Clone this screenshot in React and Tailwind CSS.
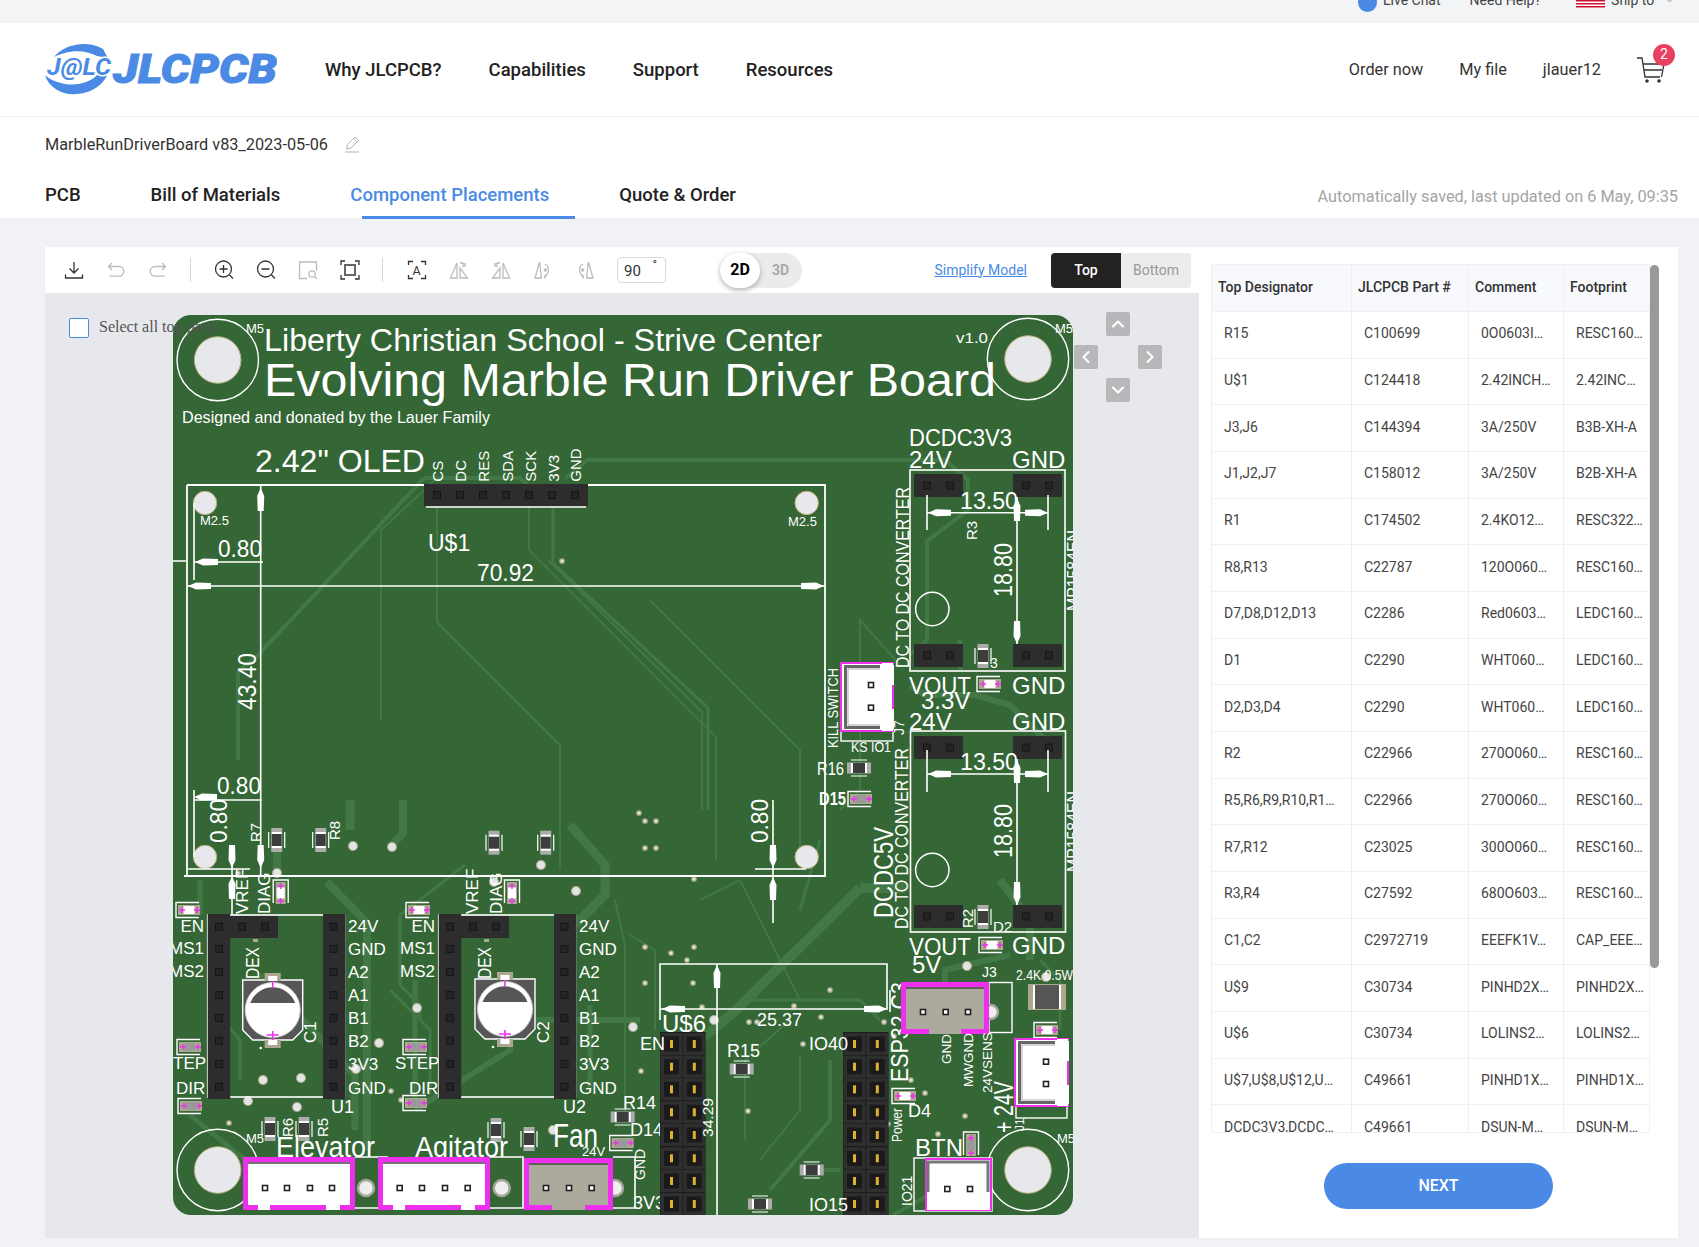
import React from "react";
import { ChevronUp, ChevronDown, ChevronLeft, ChevronRight } from "lucide-react";

const T = ({ x, y, s = 18, w, r, a, c = "#fff", fw, children }) => (
  <text
    {...(r ? { transform: `translate(${x} ${y}) rotate(-90)` } : { x, y })}
    fontSize={s}
    fill={c}
    fontWeight={fw}
    textAnchor={a}
    {...(w ? { textLength: w, lengthAdjust: "spacingAndGlyphs" } : {})}
  >
    {children}
  </text>
);
const Arw = ({ x, y, d = 0 }) => (
  <polygon transform={`translate(${x} ${y}) rotate(${d})`} points="0,0 8,-3.5 23,-3 23,3 8,3.5" fill="#fff" />
);
const L2 = ({ d, w = 1.6 }) => <path d={d} fill="none" stroke="#fff" strokeWidth={w} />;
const Res = ({ x, y, v }) => (
  <g transform={`translate(${x} ${y}) rotate(${v ? 90 : 0})`}>
    <rect x="-12" y="-5.5" width="24" height="11" fill="#acacac" />
    <rect x="-8" y="-5" width="16" height="10" fill="#fff" />
    <rect x="-6" y="-5" width="12" height="10" fill="#3d3d3d" />
    <path d="M-8 -8H8M-8 8H8" stroke="#fff" strokeWidth="1.2" />
  </g>
);
const Led = ({ x, y, v, g }) => (
  <g transform={`translate(${x} ${y}) rotate(${v ? 90 : 0})`}>
    <path d="M10 -7.5H-13V7.5H10" fill="none" stroke="#fff" strokeWidth="1.4" />
    <rect x="-11" y="-5" width="22" height="10" fill="#aba88f" />
    <rect x="-5.5" y="-4" width="11" height="8" fill={g ? "#9a9a9a" : "#fff"} />
    <path d="M-10 0H-4M-7 -3V3M5 0H11M8 -3V3" stroke="#ee30ee" strokeWidth="1.4" />
  </g>
);
const Via = ({ p, big }) => (
  <circle cx={p[0]} cy={p[1]} r={big ? 4.5 : 2.2} fill="#e3e4e4" stroke="#a9a98a" strokeWidth={big ? 1.2 : 1.3} />
);
const PinSq = ({ x, y }) => <rect x={x - 3.5} y={y - 3.5} width="7" height="7" fill="#242424" stroke="#161616" strokeWidth="1" />;
const Hdr2 = ({ x, y, h = 23 }) => (
  <g>
    <rect x={x} y={y} width="49" height={h} fill="#2d2d2d" />
    <PinSq x={x + 13} y={y + h / 2} />
    <PinSq x={x + 36} y={y + h / 2} />
  </g>
);
const Conn = ({ x, y, w, h, pins, tan, py }) => (
  <g>
    <rect x={x} y={y} width={w} height={h} fill="#ee30ee" />
    <rect x={x + 5} y={y + 5} width={w - 10} height={h - 10} fill={tan ? "#aca99d" : "#fff"} />
    <path d={`M${x + 5} ${y + 6}H${x + w - 5}`} stroke="#444" strokeWidth="1.5" />
    {!tan && <rect x={x + 15} y={y + h - 6} width="12" height="6" fill="#fff" />}
    {!tan && <rect x={x + w - 29} y={y + h - 6} width="14" height="6" fill="#fff" />}
    {tan && <rect x={x + 28} y={y + h - 5} width={w - 56} height="5" fill="#aca99d" />}
    {pins.map((p) => (
      <rect key={p} x={p - 2.5} y={py - 2.5} width="5" height="5" fill="#fff" stroke="#222" strokeWidth="1.6" />
    ))}
  </g>
);
const ConnV = ({ x, y, w, h, pins, px }) => (
  <g>
    <rect x={x} y={y} width={w} height={h} fill="#fff" stroke="#ee30ee" strokeWidth="2" />
    <path d={`M${x + w - 1} ${y + 12}V${y + h - 12}`} stroke="#fff" strokeWidth="4" />
    <path d={`M${x + w - 11} ${y + 2}H${x + w}M${x + w - 11} ${y + h - 2}H${x + w}M${x + w - 1} ${y + 2}V${y + h - 2}`} stroke="#fff" strokeWidth="4" />
    <path d={`M${x + w - 13} ${y + 3.5}H${x + 4.5}V${y + h - 3.5}H${x + w - 13}`} fill="none" stroke="#666" strokeWidth="3" />
    <path d={`M${x + w - 13} ${y + 6}H${x + 7}V${y + h - 6}H${x + w - 13}`} fill="none" stroke="#aaa" strokeWidth="1" />
    <path d={`M${x + w} ${y + 22}V${y + 46}`} stroke="#ee30ee" strokeWidth="2" />
    {pins.map((p) => (
      <rect key={p} x={px - 2.5} y={p - 2.5} width="5" height="5" fill="#fff" stroke="#222" strokeWidth="1.6" />
    ))}
  </g>
);
const Cap = ({ cx, cy }) => (
  <g>
    <path d={`M${cx - 30} ${cy - 30}H${cx + 30}V${cy + 20}L${cx + 20} ${cy + 30}H${cx - 20}L${cx - 30} ${cy + 20}Z`} fill="#565656" stroke="#fff" strokeWidth="1.4" />
    <rect x={cx - 8} y={cy - 37} width="16" height="8" fill="#aba88f" />
    <rect x={cx - 4.5} y={cy - 34} width="9" height="5" fill="#fff" />
    <rect x={cx - 8} y={cy + 30} width="16" height="8" fill="#aba88f" />
    <rect x={cx - 4.5} y={cy + 30} width="9" height="5" fill="#fff" />
    <circle cx={cx} cy={cy} r="27.5" fill="#fff" stroke="#cfcfcf" strokeWidth="1" />
    <path d={`M${cx - 22.5} ${cy - 7}A24 24 0 0 1 ${cx + 22.5} ${cy - 7}Z`} fill="#565656" />
    <path d={`M${cx} ${cy - 29}V${cy - 22}M${cx - 6} ${cy + 25}H${cx + 6}M${cx} ${cy + 21}V${cy + 30}`} stroke="#ee30ee" strokeWidth="1.6" />
    <circle cx={cx - 12} cy={cy + 38} r="1.3" fill="#fff" />
  </g>
);

const traces = [
  ["M424 478L258 655L238 672V760", 4],
  ["M424 478H520L535 492", 4],
  ["M587 460L566 478", 4],
  ["M587 460H945L968 480V510L927 541V640L910 655", 4],
  ["M381 720V530L437 478", 2],
  ["M437 505V622L560 745V870", 2],
  ["M529 505V550L716 737V860", 2],
  ["M553 505V563L708 708V810", 3],
  ["M548 560L702 712V810", 2],
  ["M650 600L800 750V860", 2],
  ["M860 888L733 1013L700 1040", 10],
  ["M860 888H905", 10],
  ["M327 882L367 923V1150", 8],
  ["M403 800V833L392 845", 8],
  ["M277 850V875", 8],
  ["M350 800V830", 9],
  ["M570 825L605 865V895L575 925", 9],
  ["M465 865L400 915V985L420 1005V1020", 3],
  ["M390 990L430 1030V1095", 3],
  ["M260 975L355 1075V1130", 7],
  ["M415 980V1100", 5],
  ["M415 1110L510 1050V1000", 6],
  ["M530 1020H640", 6],
  ["M590 1005V1090", 5],
  ["M615 900L625 945V1120", 2],
  ["M630 935L655 950V1030", 2],
  ["M740 1000H860L880 1020", 3],
  ["M790 1020L745 1060V1140", 2],
  ["M800 1055V1110L760 1160", 2],
  ["M810 1170H840", 4],
  ["M770 1190L830 1120V1060", 4],
  ["M893 1215L955 1180", 4],
  ["M1000 880L1030 920V960", 8],
  ["M965 1020L945 1000V970L1010 955", 6],
  ["M1040 960L1060 980V1030", 3],
  ["M910 685L925 695H975L1010 705L1060 755", 6],
  ["M960 640V670", 5],
  ["M900 665L860 620V720", 2],
  ["M860 730V790L840 810", 2],
  ["M820 840L800 910", 3],
  ["M700 900L740 880L800 1000", 2],
  ["M200 880V915", 5],
  ["M190 1115L245 1160", 5],
  ["M215 1010L240 1040V1080", 3],
];
const small = [
  [562,561],[639,813],[645,821],[645,848],[645,947],[645,983],[641,1071],[391,1091],[401,1100],[229,1123],[238,873],[656,821],[656,848],[694,879],[694,947],[671,953],[687,960],[693,983],[830,990],[794,1006],[702,1007],[821,1017],[749,1022],[757,1022],[884,1022],[803,1044],[894,1036],[911,1080],[925,1093],[965,1116],[938,1134],[748,1111],[888,1124],
];
const bigv = [
  [353,846],[392,847],[277,873],[541,865],[494,882],[576,891],[417,1008],[379,1043],[263,1080],[301,1078],[248,1101],[297,1107],[356,1069],[633,1027],[553,1130],[967,966],[1046,977],[714,1020],
];
const ly = [926.7, 949, 972, 995, 1018, 1040.7, 1064, 1086.7];
const ry = ["24V", "GND", "A2", "A1", "B1", "B2", "3V3", "GND"];
const lb = [932, 955, 978, 1001, 1024, 1047, 1070, 1094];

const Module = ({ dx }) => (
  <g>
    <rect x={207.7 + dx} y="915" width="137" height="182" fill="none" stroke="#fff" strokeWidth="1.6" />
    <rect x={207.7 + dx} y="914" width="22.5" height="185" fill="#2d2d2d" />
    <rect x={323 + dx} y="914" width="22.5" height="185" fill="#2d2d2d" />
    <rect x={230 + dx} y="916" width="48" height="22" fill="#2d2d2d" />
    {ly.map((y) => <PinSq key={y} x={219 + dx} y={y} />)}
    {ly.map((y) => <PinSq key={y} x={333.5 + dx} y={y} />)}
    <PinSq x={242 + dx} y="926.7" />
    <PinSq x={265 + dx} y="926.7" />
    {ry.map((t, i) => <T key={i} x={348 + dx} y={lb[i]} s={17}>{t}</T>)}
    {[["EN", 932], ["MS1", 954], ["MS2", 977]].map(([t, y]) => <T key={t} x={204 + dx} y={y} s={17} a="end">{t}</T>)}
  </g>
);
const HdrRow = ({ x }) => (
  <g>
    <rect x={x} y="1032" width="45.5" height="183" fill="#1c1c1c" />
    {[1044, 1066.7, 1089.3, 1112.3, 1135, 1158.3, 1181, 1204].map((y) => (
      <g key={y}>
        {[0, 22.8].map((o) => (
          <g key={o}>
            <rect x={x + o + 0.5} y={y - 11} width="22" height="22" fill="#2f2f2f" />
            <rect x={x + o + 4} y={y - 7.5} width="15" height="15" fill="#1a1a1a" />
            <rect x={x + o + 10} y={y - 4} width="3" height="8" fill="#e0b030" />
          </g>
        ))}
      </g>
    ))}
  </g>
);

function Board() {
  return (
    <svg viewBox="173 315 900 900" className="block w-[900px] h-[900px] font-['Liberation_Sans',sans-serif]">
      <defs>
        <clipPath id="bd"><rect x="173" y="315" width="900" height="900" rx="18" /></clipPath>
      </defs>
      <g clipPath="url(#bd)">
        <rect x="173" y="315" width="900" height="900" fill="#346636" />
        <g fill="none" stroke="#427845" strokeLinejoin="miter">
          {traces.map(([d, w], i) => <path key={i} d={d} strokeWidth={w} />)}
        </g>
        {small.map((p, i) => <Via key={i} p={p} />)}
        {bigv.map((p, i) => <Via key={i} p={p} big />)}

        {[[217.7, 360], [1028, 359], [217.7, 1170], [1028, 1170]].map(([x, y]) => (
          <g key={x + "" + y}>
            <circle cx={x} cy={y} r="23.3" fill="#e7e8ec" stroke="#b9b07a" strokeWidth="1" />
            <circle cx={x} cy={y} r="40.7" fill="none" stroke="#fff" strokeWidth="1.4" />
          </g>
        ))}
        <T x={246} y={333} s={13}>M5</T>
        <T x={1055} y={333} s={13}>M5</T>
        <T x={246} y={1143} s={13}>M5</T>
        <T x={1057} y={1143} s={13}>M5</T>
        <T x={956} y={343} s={15} w={32}>v1.0</T>

        <T x={264} y={351} s={31} w={558}>Liberty Christian School - Strive Center</T>
        <T x={264} y={396} s={46} w={732}>Evolving Marble Run Driver Board</T>
        <T x={182} y={423} s={17} w={308}>Designed and donated by the Lauer Family</T>
        <T x={255} y={472} s={31} w={170}>2.42" OLED</T>

        {[["CS", 442.7], ["DC", 466], ["RES", 489], ["SDA", 512.7], ["SCK", 535.7], ["3V3", 558.7], ["GND", 580.7]].map(([t, x]) => (
          <T key={t} x={x} y={481.7} s={15} r>{t}</T>
        ))}

        {/* OLED outline and dimensions */}
        <L2 d="M187 485H825V876H184" w={1.8} />
        <L2 d="M187 485V876" w={1.8} />
        <rect x="424" y="484" width="164" height="22" fill="#2d2d2d" />
        <L2 d="M426 507H586" w={1.5} />
        {[437, 460, 483, 506, 529, 552, 575].map((x) => <PinSq key={x} x={x} y={495} />)}
        {[[205, 503], [806.7, 503], [205, 857], [806.7, 857]].map(([x, y]) => (
          <circle key={x + "" + y} cx={x} cy={y} r="11.7" fill="#e7e8ec" stroke="#b9b07a" strokeWidth="1" />
        ))}
        <T x={200} y={525} s={13}>M2.5</T>
        <T x={788} y={526} s={13}>M2.5</T>
        <L2 d="M194 503V580M194 562H263M173 561H186" />
        <Arw x={195} y={562} />
        <T x={218} y={557} s={23} w={44}>0.80</T>
        <L2 d="M260.7 485V876" />
        <Arw x={260.7} y={488} d={90} />
        <L2 d="M187 586H825" />
        <Arw x={188} y={586} />
        <Arw x={824} y={586} d={180} />
        <T x={428} y={551} s={23}>U$1</T>
        <T x={477} y={581} s={23} w={57}>70.92</T>
        <T x={256} y={710} s={25} w={57} r>43.40</T>
        <T x={217} y={794} s={23} w={44}>0.80</T>
        <L2 d="M194 800H262M194 790V857M187 869H250" />
        <Arw x={194} y={797} />
        <T x={226.7} y={843} s={23} w={44} r>0.80</T>
        <L2 d="M232 845V915" />
        <Arw x={232} y={868} d={-90} />
        <Arw x={232} y={876} d={90} />
        <Arw x={260.7} y={868} d={-90} />
        <T x={768} y={843} s={23} w={44} r>0.80</T>
        <L2 d="M773 800V923M755 869H806" />
        <Arw x={773} y={868} d={-90} />
        <Arw x={773} y={877} d={90} />

        {/* DC-DC 3V3 */}
        <T x={909} y={446} s={24} w={103}>DCDC3V3</T>
        <T x={909} y={468} s={24}>24V</T>
        <T x={1012} y={468} s={24}>GND</T>
        <rect x="910" y="470" width="155" height="201" fill="none" stroke="#fff" strokeWidth="1.6" />
        <Hdr2 x={914} y={474} />
        <Hdr2 x={1013} y={474} />
        <Hdr2 x={914} y={644} />
        <Hdr2 x={1013} y={644} />
        <T x={960} y={509} s={24} w={58}>13.50</T>
        <L2 d="M927 495V530M1048 495V530M927 512.7H1048M1017 497V644" />
        <Arw x={928} y={512.7} />
        <Arw x={1048} y={512.7} d={180} />
        <Arw x={1017} y={498} d={90} />
        <Arw x={1017} y={644} d={-90} />
        <T x={1011.7} y={597} s={26} w={54} r>18.80</T>
        <T x={977} y={540} s={15} r>R3</T>
        <circle cx="932.3" cy="609" r="16.7" fill="none" stroke="#fff" strokeWidth="1.5" />
        <T x={908.7} y={668} s={18.5} w={181} r>DC TO DC CONVERTER</T>
        <T x={1079} y={611} s={16} w={81} r>MP1584EN</T>
        <Res x={983} y={656} v />
        <T x={990} y={668} s={14}>3</T>
        <T x={909} y={694} s={24} w={62}>VOUT</T>
        <T x={1012} y={694} s={24}>GND</T>
        <Led x={990} y={684} />
        <T x={921} y={709} s={24}>3.3V</T>

        {/* DC-DC 5V */}
        <T x={909} y={730} s={24}>24V</T>
        <T x={1012} y={730} s={24}>GND</T>
        <rect x="910.5" y="731" width="155" height="201" fill="none" stroke="#fff" strokeWidth="1.6" />
        <Hdr2 x={914} y={736} />
        <Hdr2 x={1013} y={736} />
        <Hdr2 x={914} y={905} />
        <Hdr2 x={1013} y={905} />
        <T x={960} y={770} s={24} w={58}>13.50</T>
        <L2 d="M927 750V792M1048 750V792M927 774H1048M1017 759V905" />
        <Arw x={928} y={774} />
        <Arw x={1048} y={774} d={180} />
        <Arw x={1017} y={760} d={90} />
        <Arw x={1017} y={905} d={-90} />
        <T x={1011.7} y={858} s={26} w={54} r>18.80</T>
        <circle cx="932.3" cy="870" r="16.7" fill="none" stroke="#fff" strokeWidth="1.5" />
        <T x={908} y={929} s={18.5} w={181} r>DC TO DC CONVERTER</T>
        <T x={1079} y={872} s={16} w={81} r>MP1584EN</T>
        <T x={893} y={918} s={27} w={91} r>DCDC5V</T>
        <T x={973} y={928} s={15} r>R2</T>
        <Res x={983} y={917} v />
        <T x={993} y={932} s={15}>D2</T>
        <T x={909} y={955} s={24} w={62}>VOUT</T>
        <T x={1012} y={954} s={24}>GND</T>
        <Led x={992} y={945} />
        <T x={912} y={973} s={24}>5V</T>

        {/* Kill switch */}
        <rect x="841" y="700" width="52" height="41" fill="none" stroke="#fff" strokeWidth="1.4" />
        <ConnV x={841} y={663} w={52} h={68} pins={[685, 707.7]} px={871} />
        <T x={838.3} y={748} s={14} w={80} r>KILL SWITCH</T>
        <T x={851} y={751.7} s={14} w={40}>KS IO1</T>
        <T x={904} y={735} s={14} r>J7</T>
        <T x={817} y={775} s={18} w={27}>R16</T>
        <Res x={859} y={768} />
        <T x={819} y={805} s={18} w={27} fw={700}>D15</T>
        <Led x={861} y={799} g />

        {/* Driver modules */}
        <Module dx={0} />
        <Module dx={231} />
        <T x={173} y={1069} s={17}>TEP</T>
        <T x={176} y={1094} s={17}>DIR</T>
        <T x={395} y={1069} s={17}>STEP</T>
        <T x={409} y={1094} s={17}>DIR</T>
        <T x={247.7} y={914} s={17} r>VREF</T>
        <T x={270} y={914} s={17} r>DIAG</T>
        <T x={478} y={914} s={17} r>VREF</T>
        <T x={502} y={914} s={17} r>DIAG</T>
        <T x={259} y={979} s={18} w={32} r>DEX</T>
        <T x={491} y={979} s={18} w={32} r>DEX</T>
        <Cap cx={272.7} cy={1010} />
        <Cap cx={505} cy={1009} />
        <T x={316} y={1043} s={17} r>C1</T>
        <T x={549} y={1043} s={17} r>C2</T>
        <T x={331} y={1113} s={18}>U1</T>
        <T x={563} y={1113} s={18}>U2</T>
        <rect x="253" y="939" width="5" height="3" fill="#aba88f" />
        <rect x="484" y="939" width="5" height="3" fill="#aba88f" />

        {[[276.7, 840], [320.7, 840], [494, 842.7], [545.7, 842.7], [270, 1129], [304, 1129], [496, 1130], [529, 1139]].map(([x, y]) => (
          <Res key={x} x={x} y={y} v />
        ))}
        <T x={261} y={842} s={15} r>R7</T>
        <T x={340} y={840} s={15} r>R8</T>
        <T x={293} y={1137} s={15} r>R6</T>
        <T x={328} y={1137} s={15} r>R5</T>
        <Led x={280.7} y={893} v />
        <Led x={189} y={910} />
        <Led x={419} y={910} />
        <Led x={512} y={893} v />
        <Led x={190} y={1047} g />
        <Led x={416} y={1047} g />
        <Led x={191} y={1106} g />
        <Led x={416} y={1103} g />

        {/* Bottom connectors */}
        <T x={276} y={1157} s={29} w={99}>Elevator</T>
        <T x={415} y={1157} s={29} w={93}>Agitator</T>
        <T x={553} y={1147} s={33} w={45}>Fan</T>
        <L2 d="M355 1157H388M490 1157H523V1208H355M355 1208H378M613 1157H635V1208H613" />
        <circle cx="366" cy="1188" r="8" fill="#eee" stroke="#a5a59a" strokeWidth="2.5" />
        <circle cx="501.7" cy="1188" r="8" fill="#eee" stroke="#a5a59a" strokeWidth="2.5" />
        <circle cx="615" cy="1188" r="8" fill="#eee" stroke="#a5a59a" strokeWidth="2.5" />
        <Conn x={243} y={1157} w={112} h={53} pins={[265, 287, 310, 332]} py={1188} />
        <Conn x={378} y={1157} w={112} h={53} pins={[399.7, 422, 445, 467.7]} py={1188} />
        <Conn x={524} y={1158} w={89} h={52} pins={[546, 569, 591.7]} py={1188} tan />
        <T x={582} y={1156} s={13}>24V</T>
        <T x={645} y={1180} s={14} r>GND</T>
        <T x={633} y={1209} s={18}>3V3</T>
        <T x={623} y={1109} s={18}>R14</T>
        <Res x={622.7} y={1117} />
        <T x={630} y={1136} s={18}>D14</T>
        <Led x={622.7} y={1143} g />

        {/* ESP32 module */}
        <T x={908} y={1082} s={24} w={100} r>ESP32 C3</T>
        <L2 d="M660 1020V964H887V1008M717 964V1215M660 1009H888M890 990V1012" />
        <Arw x={662} y={1009} d={0} />
        <Arw x={887} y={1009} d={180} />
        <Arw x={717} y={965} d={90} />
        <T x={757} y={1026} s={18}>25.37</T>
        <T x={662} y={1032} s={24}>U$6</T>
        <HdrRow x={660} />
        <HdrRow x={843} />
        <T x={640} y={1050} s={18}>EN</T>
        <T x={713} y={1137} s={14} w={39} r>34.29</T>
        <T x={727} y={1057} s={18}>R15</T>
        <Res x={741.7} y={1069} />
        <Res x={811.7} y={1170} />
        <Res x={760} y={1204} />
        <T x={809} y={1050} s={18}>IO40</T>
        <T x={809} y={1211} s={18}>IO15</T>

        {/* J3 */}
        <rect x="989" y="982.5" width="23" height="50" fill="none" stroke="#fff" strokeWidth="1.4" />
        <circle cx="991" cy="1012" r="7" fill="#eee" stroke="#a5a59a" strokeWidth="2.5" />
        <Conn x={901} y={982} w={88} h={52} pins={[923, 945.7, 968]} py={1012} tan />
        <T x={982} y={977} s={14}>J3</T>
        <T x={950.7} y={1064} s={13.5} r>GND</T>
        <T x={973} y={1087} s={13.5} r>MWGND</T>
        <T x={991.7} y={1093} s={13.5} r>24VSENS</T>
        <T x={1016} y={980} s={14} w={57}>2.4K 0.5W</T>
        <rect x="1028" y="984" width="38" height="26" fill="#aba88f" />
        <rect x="1033" y="985" width="28" height="24" fill="#fff" />
        <rect x="1035" y="985" width="24" height="24" fill="#555" />
        <Led x={1047} y={1030} />
        <rect x="1016" y="1090" width="51" height="28" fill="none" stroke="#fff" strokeWidth="1.4" />
        <ConnV x={1015} y={1039} w={53} h={67} pins={[1061.7, 1084]} px={1046} />
        <T x={1013} y={1133} s={27} w={52} r>+ 24V</T>
        <T x={1024} y={1131} s={12} r>J1</T>
        <T x={902} y={1142} s={14} w={34} r>Power</T>
        <T x={908} y={1117} s={18}>D4</T>
        <Led x={905} y={1096} />
        <T x={915} y={1156} s={24}>BTN</T>
        <Led x={971} y={1145} v g />
        <rect x="914" y="1158" width="78" height="53" fill="none" stroke="#fff" strokeWidth="1.4" />
        <rect x="925" y="1158" width="67" height="53" fill="#ee30ee" />
        <rect x="927" y="1160" width="63" height="50" fill="#fff" />
        <path d="M928 1192V1162H988V1192" fill="none" stroke="#777" strokeWidth="3" />
        {[947.3, 970].map((x) => (
          <rect key={x} x={x - 2.5} y={1186.5} width="5" height="5" fill="#fff" stroke="#222" strokeWidth="1.6" />
        ))}
        <T x={912} y={1206} s={14} r>IO21</T>
      </g>
    </svg>
  );
}

const Ic = ({ c = "#333", children }) => (
  <svg viewBox="0 0 20 20" className="w-5 h-5 shrink-0" fill="none" stroke={c} strokeWidth="1.3">{children}</svg>
);
const G = "#bcbcbc";
const Flip = ({ flip, c = G }) => (
  <Ic c={c}>
    <g transform={flip ? "matrix(-1 0 0 1 20 0)" : undefined}>
      <path d="M8 3 1.5 18H8Z" />
      <path d="M11 8V18H18.5Z" />
      <path d="M11 2.5a6 6 0 0 1 5 3.5M16 3v3.2h-3" />
    </g>
  </Ic>
);
const Rot = ({ flip, c = G }) => (
  <Ic c={c}>
    <g transform={flip ? "matrix(-1 0 0 1 20 0)" : undefined}>
      <path d="M6.5 2 2 18h6.5Z" />
      <path d="M12 4a7 7 0 0 1 0 12M14 15.5l-2.5.5.5 2.5" />
      <circle cx="12.3" cy="10" r="1" fill={c} />
    </g>
  </Ic>
);

function Toolbar() {
  return (
    <div className="h-[46px] bg-white flex items-center pl-[19px] pr-[8px]">
      <div className="flex items-center gap-[22px]">
        <Ic><path d="M10 2v11M5.5 8.5 10 13l4.5-4.5M1.5 14.5v3.5h17v-3.5" /></Ic>
        <Ic c={G}><path d="M6 3 2.5 6.5 6 10M2.5 6.5H13a4.8 4.8 0 0 1 0 9.6H3.5" /></Ic>
        <Ic c={G}><path d="M14 3l3.5 3.5L14 10M17.5 6.5H7a4.8 4.8 0 0 0 0 9.6h9.5" /></Ic>
        <div className="w-px h-6 bg-[#d5d5d5] mr-[1px]" />
        <Ic><circle cx="9.5" cy="9" r="8" /><path d="M5.5 9h8M9.5 5v8M15.5 15l3.5 3.5" /></Ic>
        <Ic><circle cx="9.5" cy="9" r="8" /><path d="M5.5 9h8M15.5 15l3.5 3.5" /></Ic>
        <Ic c={G}><path d="M18.5 11V2h-17v16.5H9" /><circle cx="14" cy="14" r="3.2" /><path d="M16.5 16.5l2.5 2.5" /></Ic>
        <Ic>
          <path d="M1 5V1h4M15 1h4v4M19 15v4h-4M5 19H1v-4" />
          <rect x="5" y="5" width="10" height="10" stroke="#666" strokeWidth="2" />
        </Ic>
        <div className="w-px h-6 bg-[#d5d5d5] mr-[2px]" />
        <Ic>
          <path d="M1.5 5V1.5H6M14 1.5h4.5V5M18.5 15v3.5H14M6 18.5H1.5V15" />
          <text x="5.6" y="14.5" fontSize="12.5" fill="#333" stroke="none">A</text>
        </Ic>
        <Flip />
        <Flip flip />
        <Rot />
        <Rot flip />
        <div className="w-[49px] h-[26px] border border-[#d9d9d9] rounded-sm flex pl-[6px] text-[15px] text-[#333] leading-[26px] relative">
          90
          <span className="ml-auto mr-[8px] text-[12px] leading-[14px]">°</span>
        </div>
      </div>
      <div className="ml-[54px] w-[82px] h-[35px] rounded-full bg-[#ebebeb] flex items-center">
        <div className="w-[40px] h-[35px] rounded-full bg-white shadow-[0_2px_5px_rgba(0,0,0,0.3)] flex items-center justify-center text-[16px] font-bold text-black">2D</div>
        <div className="ml-[12px] text-[14px] font-bold text-[#aaa]">3D</div>
      </div>
      <a className="ml-auto text-[14px] text-[#4a8ae5] underline">Simplify Model</a>
      <div className="ml-[24px] flex h-[35px] text-[14px]">
        <div className="w-[70px] bg-[#222] text-white rounded-l-sm flex items-center justify-center font-medium">Top</div>
        <div className="w-[70px] bg-[#ececec] text-[#999] rounded-r-sm flex items-center justify-center">Bottom</div>
      </div>
    </div>
  );
}

const rows = [
  ["R15", "C100699", "0O0603I…", "RESC160…"],
  ["U$1", "C124418", "2.42INCH…", "2.42INC…"],
  ["J3,J6", "C144394", "3A/250V", "B3B-XH-A"],
  ["J1,J2,J7", "C158012", "3A/250V", "B2B-XH-A"],
  ["R1", "C174502", "2.4KO12…", "RESC322…"],
  ["R8,R13", "C22787", "120O060…", "RESC160…"],
  ["D7,D8,D12,D13", "C2286", "Red0603…", "LEDC160…"],
  ["D1", "C2290", "WHT060…", "LEDC160…"],
  ["D2,D3,D4", "C2290", "WHT060…", "LEDC160…"],
  ["R2", "C22966", "270O060…", "RESC160…"],
  ["R5,R6,R9,R10,R1…", "C22966", "270O060…", "RESC160…"],
  ["R7,R12", "C23025", "300O060…", "RESC160…"],
  ["R3,R4", "C27592", "680O603…", "RESC160…"],
  ["C1,C2", "C2972719", "EEEFK1V…", "CAP_EEE…"],
  ["U$9", "C30734", "PINHD2X…", "PINHD2X…"],
  ["U$6", "C30734", "LOLINS2…", "LOLINS2…"],
  ["U$7,U$8,U$12,U…", "C49661", "PINHD1X…", "PINHD1X…"],
  ["DCDC3V3,DCDC…", "C49661", "DSUN-M…", "DSUN-M…"],
];

function PartsTable() {
  return (
    <div className="flex items-start ml-[12px] mt-[17px]">
      <div className="w-[439px] h-[869px] overflow-hidden border-l border-t border-b border-[#eef0f4]">
        <div className="grid grid-cols-[140px_117px_95px_86px] h-[47px] bg-[#f7f9fd] border-b border-[#eef0f4] text-[14px] font-medium text-[#333]">
          {["Top Designator", "JLCPCB Part #", "Comment", "Footprint"].map((h) => (
            <div key={h} className="pl-[6px] flex items-center border-r border-[#eef0f4] pb-[1px]">{h}</div>
          ))}
        </div>
        {rows.map((r, i) => (
          <div key={i} className="grid grid-cols-[140px_117px_95px_86px] h-[46.68px] border-b border-[#eef0f4] text-[14px] text-[#444]">
            {r.map((c, j) => (
              <div key={j} className="pl-[12px] flex items-center border-r border-[#eef0f4] whitespace-nowrap pb-[2px]">{c}</div>
            ))}
          </div>
        ))}
      </div>
      <div className="w-[9px] h-[703px] bg-[#999] rounded-[5px] mt-[1px]" />
    </div>
  );
}

export default function App() {
  return (
    <div className="w-[1699px] h-[1247px] overflow-hidden flex flex-col bg-[#f1f2f6] font-[Roboto,sans-serif] text-[#222]">
      <div className="h-[23px] overflow-hidden bg-[#f3f4f6] shrink-0">
        <div className="flex items-center -mt-[13px] h-[26px] pl-[1358px] text-[14px] text-[#444] leading-5">
          <div className="w-[19px] h-[19px] rounded-full bg-[#4a8ae5] mt-[4px]" />
          <span className="ml-[6px]">Live Chat</span>
          <span className="ml-[29px]">Need Help?</span>
          <svg viewBox="0 0 29 20" className="ml-[35px] w-[29px] h-[20px] -mt-[4px]">
            <rect width="29" height="20" fill="#fff" />
            {[0, 3, 6, 9, 12, 15, 18].map((y) => <rect key={y} y={y} width="29" height="1.5" fill="#c8102e" />)}
          </svg>
          <span className="ml-[6px]">Ship to</span>
          <ChevronDown className="ml-[10px] w-[11px] h-[11px] text-[#888]" />
        </div>
      </div>

      <header className="h-[94px] shrink-0 bg-white border-b border-[#f0f1f4] flex items-center">
        <svg viewBox="0 0 232 52" className="ml-[45px] w-[232px] h-[52px] mb-[1px]">
          <path d="M9 14C18 2 42-4 58 6L63 15L52 13C38 5 20 8 9 14Z" fill="#4a8ae5" />
          <path d="M0 32C4 46 20 53 32 51C48 50 60 40 63 30L54 30C46 40 30 44 16 40C8 38 3 35 0 32Z" fill="#4a8ae5" />
          <text x="2" y="32" fontSize="23" fontWeight="700" fontStyle="italic" fill="#4a8ae5" stroke="#fff" strokeWidth="3" paintOrder="stroke" fontFamily="Roboto" textLength="64" lengthAdjust="spacingAndGlyphs">J@LC</text>
          <text x="68" y="40" fontSize="40" fontWeight="900" fontStyle="italic" fill="#4a8ae5" stroke="#4a8ae5" strokeWidth="1" fontFamily="Roboto" textLength="164" lengthAdjust="spacingAndGlyphs">JLCPCB</text>
        </svg>
        <nav className="ml-[48px] flex gap-[47px] text-[18.5px] font-medium text-[#222] pt-[2px]">
          <span>Why JLCPCB?</span>
          <span>Capabilities</span>
          <span>Support</span>
          <span>Resources</span>
        </nav>
        <div className="ml-auto flex items-center gap-[36px] text-[16.3px] text-[#333] pr-[34px]">
          <span className="pt-[2px]">Order now</span>
          <span className="pt-[2px]">My file</span>
          <span className="pt-[2px]">jlauer12</span>
          <div className="relative">
            <svg viewBox="0 0 28 26" className="w-[28px] h-[26px]" fill="none" stroke="#333" strokeWidth="1.3">
              <path d="M0 1h5l3 19h15" />
              <path d="M6 7h21l-2.5 13M7 13h18" />
              <circle cx="10" cy="24" r="1.8" fill="#333" stroke="none" />
              <circle cx="22" cy="24" r="1.8" fill="#333" stroke="none" />
            </svg>
            <div className="absolute -top-[13px] -right-[10px] w-[22px] h-[22px] rounded-full bg-[#e8415f] text-white text-[14px] flex items-center justify-center">2</div>
          </div>
        </div>
      </header>

      <section className="h-[101px] shrink-0 bg-white pt-[16px] pl-[45px] pr-[21px]">
        <div className="flex items-center h-[24px] text-[16.3px] text-[#333]">
          <span>MarbleRunDriverBoard v83_2023-05-06</span>
          <svg viewBox="0 0 16 17" className="ml-[16px] w-[16px] h-[17px] -mt-[1px]" fill="none" stroke="#b5b5b5" strokeWidth="1">
            <path d="M2.5 13 3.5 8.5 11 1l3.5 3.5L7 12ZM9.5 2.5 13 6M1 16h14" />
          </svg>
        </div>
        <div className="flex mt-[25px] text-[18.5px] font-medium h-[24px] gap-[70px] text-[#222]">
          <span>PCB</span>
          <span>Bill of Materials</span>
          <span className="relative text-[#4a8ae5]">
            Component Placements
            <span className="absolute left-[12px] top-[34px] w-[213px] h-[3px] bg-[#4a8ae5]" />
          </span>
          <span>Quote &amp; Order</span>
          <span className="ml-auto text-[16.3px] font-normal text-[#a5a5a5] pt-[3px]">Automatically saved, last updated on 6 May, 09:35</span>
        </div>
      </section>

      <main className="flex-1 flex pt-[29px] pl-[45px]">
        <div className="w-[1154px] h-[991px] flex flex-col">
          <Toolbar />
          <div className="flex-1 bg-[#e7e8ec] relative flex items-start pl-[128px] pt-[22px]">
            <div className="absolute z-10 left-[24px] top-[22px] flex items-center gap-[10px] font-['Liberation_Serif',serif] text-[16px] text-[#555]">
              <span className="w-[20px] h-[20px] mt-[2px] bg-white border border-[#4a8ae5] rounded-[2px]" />
              Select all top parts
            </div>
            <Board />
            <div className="ml-[1px] -mt-[3px] grid grid-cols-[24px_24px_24px] gap-x-[8px] gap-y-[9px]">
              <span />
              <span className="h-[24px] bg-[#b8b8bb] rounded-[2px] flex items-center justify-center"><ChevronUp className="w-5 h-5 text-white" strokeWidth={2.5} /></span>
              <span />
              <span className="h-[24px] bg-[#b8b8bb] rounded-[2px] flex items-center justify-center"><ChevronLeft className="w-5 h-5 text-white" strokeWidth={2.5} /></span>
              <span />
              <span className="h-[24px] bg-[#b8b8bb] rounded-[2px] flex items-center justify-center"><ChevronRight className="w-5 h-5 text-white" strokeWidth={2.5} /></span>
              <span />
              <span className="h-[24px] bg-[#b8b8bb] rounded-[2px] flex items-center justify-center"><ChevronDown className="w-5 h-5 text-white" strokeWidth={2.5} /></span>
              <span />
            </div>
          </div>
        </div>
        <aside className="w-[479px] h-[991px] bg-white flex flex-col">
          <PartsTable />
          <button className="mt-[30px] ml-[125px] w-[229px] h-[46px] rounded-full bg-[#4a8ae5] text-white text-[16px] font-medium">NEXT</button>
        </aside>
      </main>
    </div>
  );
}
